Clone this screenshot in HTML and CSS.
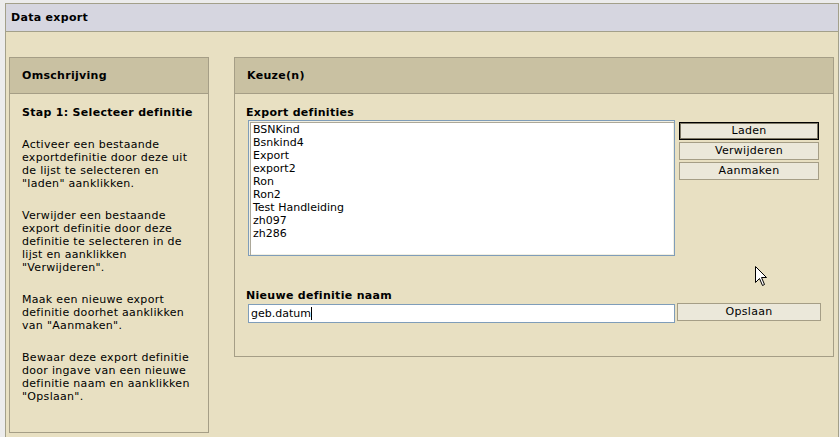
FILE: index.html
```html
<!DOCTYPE html>
<html lang="nl">
<head>
<meta charset="utf-8">
<title>Data export</title>
<link rel="stylesheet" href="styles.css">
</head>
<body>
<div class="window">
  <div class="titlebar">Data export</div>
  <div class="content">
    <section class="panel panel-left">
      <div class="panel-head">Omschrijving</div>
      <div class="panel-body">
        <h2 class="step">Stap 1: Selecteer definitie</h2>
        <p>Activeer een bestaande<br>exportdefinitie door deze uit<br>de lijst te selecteren en<br>"laden" aanklikken.</p>
        <p>Verwijder een bestaande<br>export definitie door deze<br>definitie te selecteren in de<br>lijst en aanklikken<br>"Verwijderen".</p>
        <p>Maak een nieuwe export<br>definitie doorhet aanklikken<br>van "Aanmaken".</p>
        <p>Bewaar deze export definitie<br>door ingave van een nieuwe<br>definitie naam en aanklikken<br>"Opslaan".</p>
      </div>
    </section>
    <section class="panel panel-right">
      <div class="panel-head">Keuze(n)</div>
      <div class="panel-body">
        <div class="field-label">Export definities</div>
        <div class="list-row">
          <ul class="listbox">
            <li>BSNKind</li>
            <li>Bsnkind4</li>
            <li>Export</li>
            <li>export2</li>
            <li>Ron</li>
            <li>Ron2</li>
            <li>Test Handleiding</li>
            <li>zh097</li>
            <li>zh286</li>
          </ul>
          <div class="btn-col">
            <button class="btn btn-default" type="button">Laden</button>
            <button class="btn" type="button">Verwijderen</button>
            <button class="btn" type="button">Aanmaken</button>
          </div>
        </div>
        <div class="field-label label-gap">Nieuwe definitie naam</div>
        <div class="input-row">
          <div class="textbox" role="textbox">geb.datum<span class="caret"></span></div>
          <button class="btn btn-save" type="button">Opslaan</button>
        </div>
      </div>
    </section>
  </div>
</div>
<svg class="cursor" width="13" height="21" viewBox="0 0 13 21" aria-hidden="true">
  <path d="M0.5 0.5 L0.5 16.5 L4.5 12.5 L7.5 19.5 L9.5 18.5 L6.5 11.5 L11.5 11.5 Z" fill="#fff" stroke="#000" stroke-width="1"/>
</svg>
</body>
</html>
```
FILE: styles.css
```css
html, body {
  margin: 0;
  height: 100%;
  overflow: hidden;
}
body {
  background: #ececec;
  font-family: "DejaVu Sans", Verdana, sans-serif;
  font-size: 11px;
  letter-spacing: 0.3px;
  color: #000;
  padding: 3px 1px 0 5px;
  box-sizing: border-box;
  display: flex;
  flex-direction: column;
}
.window {
  flex: 1;
  border: 1px solid #a3a08a;
  border-bottom: 0;
  background: #e8e0c2;
}
.titlebar {
  height: 27px;
  line-height: 27px;
  background: #d6d6e0;
  border-bottom: 1px solid #a3a08a;
  padding-left: 5px;
  font-weight: bold;
}
.content {
  display: flex;
  gap: 25px;
  align-items: flex-start;
  padding: 25px 4px 0 3px;
}
.panel {
  border: 1px solid #a59e86;
  box-sizing: border-box;
}
.panel-left { width: 200px; }
.panel-right { width: 600px; }
.panel-head {
  height: 35px;
  line-height: 35px;
  background: #c9c1a2;
  border-bottom: 1px solid #a59e86;
  padding-left: 12px;
  font-weight: bold;
}
.panel-left .panel-body {
  padding: 12px 2px 10px 12px;
  line-height: 13px;
  white-space: nowrap;
}
.step {
  margin: 0 0 19px;
  font-size: 11px;
  font-weight: bold;
  line-height: 13px;
}
.panel-left p {
  margin: 0 0 19px;
}
.panel-right .panel-body {
  padding: 12px 12px 33px 11px;
}
.field-label {
  font-weight: bold;
  line-height: 13px;
  margin-bottom: 1px;
}
.label-gap {
  margin-top: 33px;
  margin-bottom: 2px;
}
.list-row {
  display: flex;
  gap: 4px;
  margin-left: 2px;
  align-items: flex-start;
}
.listbox {
  width: 427px;
  height: 136px;
  box-sizing: border-box;
  margin: 0;
  padding: 2px 0 0 4px;
  list-style: none;
  background: #fff;
  border: 1px solid #7f9db9;
  box-shadow: inset 1px 1px 0 #f1efe2, inset 2px 2px 0 #aca899, inset -1px -1px 0 #f1efe2;
  font-size: 11px;
  letter-spacing: 0;
  line-height: 13px;
}
.btn-col {
  display: flex;
  flex-direction: column;
  gap: 2px;
  padding-top: 2px;
}
.btn {
  width: 140px;
  height: 18px;
  box-sizing: border-box;
  border: 1px solid #a59e86;
  background: #ebe8da;
  font: inherit;
  letter-spacing: inherit;
  line-height: 16px;
  padding: 0;
  margin: 0;
  color: #000;
  border-radius: 0;
}
.btn-default {
  border-color: #000;
  box-shadow: inset 0 0 0 1px #7d7866;
}
.input-row {
  display: flex;
  gap: 2px;
  margin-left: 2px;
  align-items: flex-start;
}
.textbox {
  width: 427px;
  height: 19px;
  box-sizing: border-box;
  border: 1px solid #7f9db9;
  background: #fff;
  padding-left: 2px;
  line-height: 17px;
  letter-spacing: 0;
}
.caret {
  display: inline-block;
  width: 1px;
  height: 13px;
  background: #000;
  vertical-align: -3px;
}
.btn-save {
  width: 144px;
  margin-top: -1px;
}
.cursor {
  position: absolute;
  left: 755px;
  top: 266px;
}
```
